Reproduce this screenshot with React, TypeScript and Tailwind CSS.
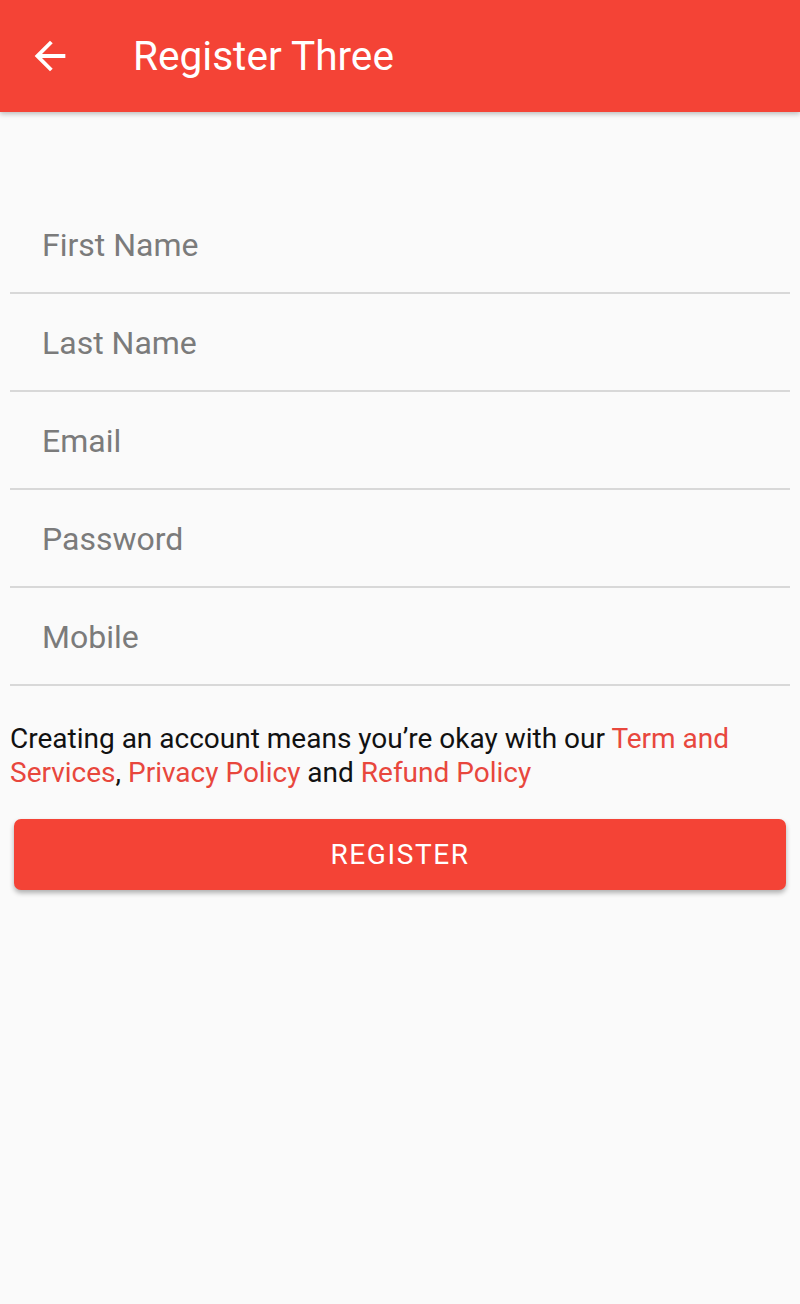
const fields = ["First Name", "Last Name", "Email", "Password", "Mobile"];

const BackIcon = () => (
  <svg viewBox="0 0 24 24" className="w-[46px] h-[46px]" fill="#ffffff">
    <path d="M20 11H7.83l5.59-5.59L12 4l-8 8 8 8 1.41-1.41L7.83 13H20v-2z" />
  </svg>
);

const App = () => {
  return (
    <div className="min-h-[1304px] bg-[#fafafa] font-['Roboto',sans-serif]">
      {/* App bar */}
      <header className="h-[112px] bg-[#f44336] flex items-center shadow-[0_2px_5px_rgba(0,0,0,0.25)] relative z-10">
        <div className="w-[46px] ml-[27px] flex items-center">
          <BackIcon />
        </div>
        <h1 className="ml-[60px] text-white text-[40.6px] font-normal leading-none">Register Three</h1>
      </header>

      {/* Form */}
      <div className="px-[10px] pt-[84px]">
        {fields.map((f) => (
          <div key={f} className="h-[98px] flex flex-col">
            <div className="flex-1 flex items-center pl-[32px] pt-[1px] text-[32px] text-[#7b7b7b]">{f}</div>
            <div className="h-[2px] bg-[#d8d8d8]" />
          </div>
        ))}

        <p className="mt-[36px] text-[28px] leading-[34px] text-[#111111]">
          Creating an account means you’re okay with our{" "}
          <span className="text-[#e8473d]">Term and Services</span>,{" "}
          <span className="text-[#e8473d]">Privacy Policy</span> and{" "}
          <span className="text-[#e8473d]">Refund Policy</span>
        </p>

        <div className="px-[4px] mt-[29px]">
          <button className="w-full h-[71px] rounded-[7px] bg-[#f44336] text-white text-[28px] tracking-[1.6px] shadow-[0_3px_5px_rgba(0,0,0,0.3)]">
            REGISTER
          </button>
        </div>
      </div>
    </div>
  );
};

export default App;
